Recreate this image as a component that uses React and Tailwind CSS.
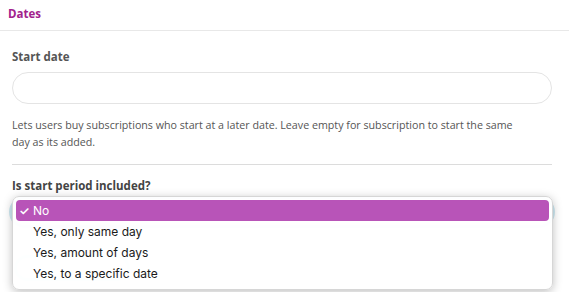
import React from 'react';

const options = ['No', 'Yes, only same day', 'Yes, amount of days', 'Yes, to a specific date'];

const App = () => {
    return (
        <div className="w-[569px] h-[292px] bg-white overflow-hidden relative" style={{ fontFamily: '"Open Sans", "Noto Sans", sans-serif' }}>
            {/* Section header */}
            <div className="h-[31px] border-b border-[#e8e8e8] flex items-center px-2">
                <h2 className="text-[11.5px] font-bold text-[#a2228d] -mt-[2px]">Dates</h2>
            </div>

            <div className="pl-3 w-[552px]">
                {/* Start date */}
                <label className="block pt-[18px] text-[11.5px] font-bold text-[#555] leading-[16px]">Start date</label>
                <div className="mt-[7px] h-[32px] rounded-full border border-[#e4e4e4] bg-white"></div>
                <p className="mt-[13px] w-[512px] text-[10.7px] leading-[17px] text-[#555]">
                    Lets users buy subscriptions who start at a later date. Leave empty for subscription to start the same day as its added.
                </p>
                <div className="mt-[13px] border-t border-[#dcdcdc]"></div>

                {/* Start period */}
                <label className="block mt-[13px] text-[11.5px] font-bold text-[#444] leading-[16px]">Is start period included?</label>

                <div className="relative mt-[2px]">
                    {/* select behind, focused */}
                    <div className="mt-[2px] h-[32px] -mx-[3px] rounded-full border-[3px] border-[#cfeaf3] bg-white"></div>
                    <div className="mt-[27px] ml-[2px] w-[116px] h-[26px] rounded-full border-[3px] border-[#d6eef6]"></div>

                    {/* native dropdown menu */}
                    <div className="absolute left-0 top-0 w-[541px] h-[94px] rounded-[7px] bg-white/95 border border-[#d6d6d6] shadow-[0_2px_10px_rgba(0,0,0,0.25)] p-[3px]" style={{ fontFamily: 'Inter, "Liberation Sans", sans-serif' }}>
                        {options.map((opt, i) => (
                            <div
                                key={opt}
                                className={`h-[21px] flex items-center rounded-[4px] text-[12px] ${i === 0 ? 'bg-[#b854b8] text-white' : 'text-[#1a1a1a]'}`}
                            >
                                <span className="w-[17px] pl-[3px] text-[12px] font-semibold">{i === 0 ? '✓' : ''}</span>
                                <span>{opt}</span>
                            </div>
                        ))}
                    </div>
                </div>
            </div>
        </div>
    );
};

export default App;
